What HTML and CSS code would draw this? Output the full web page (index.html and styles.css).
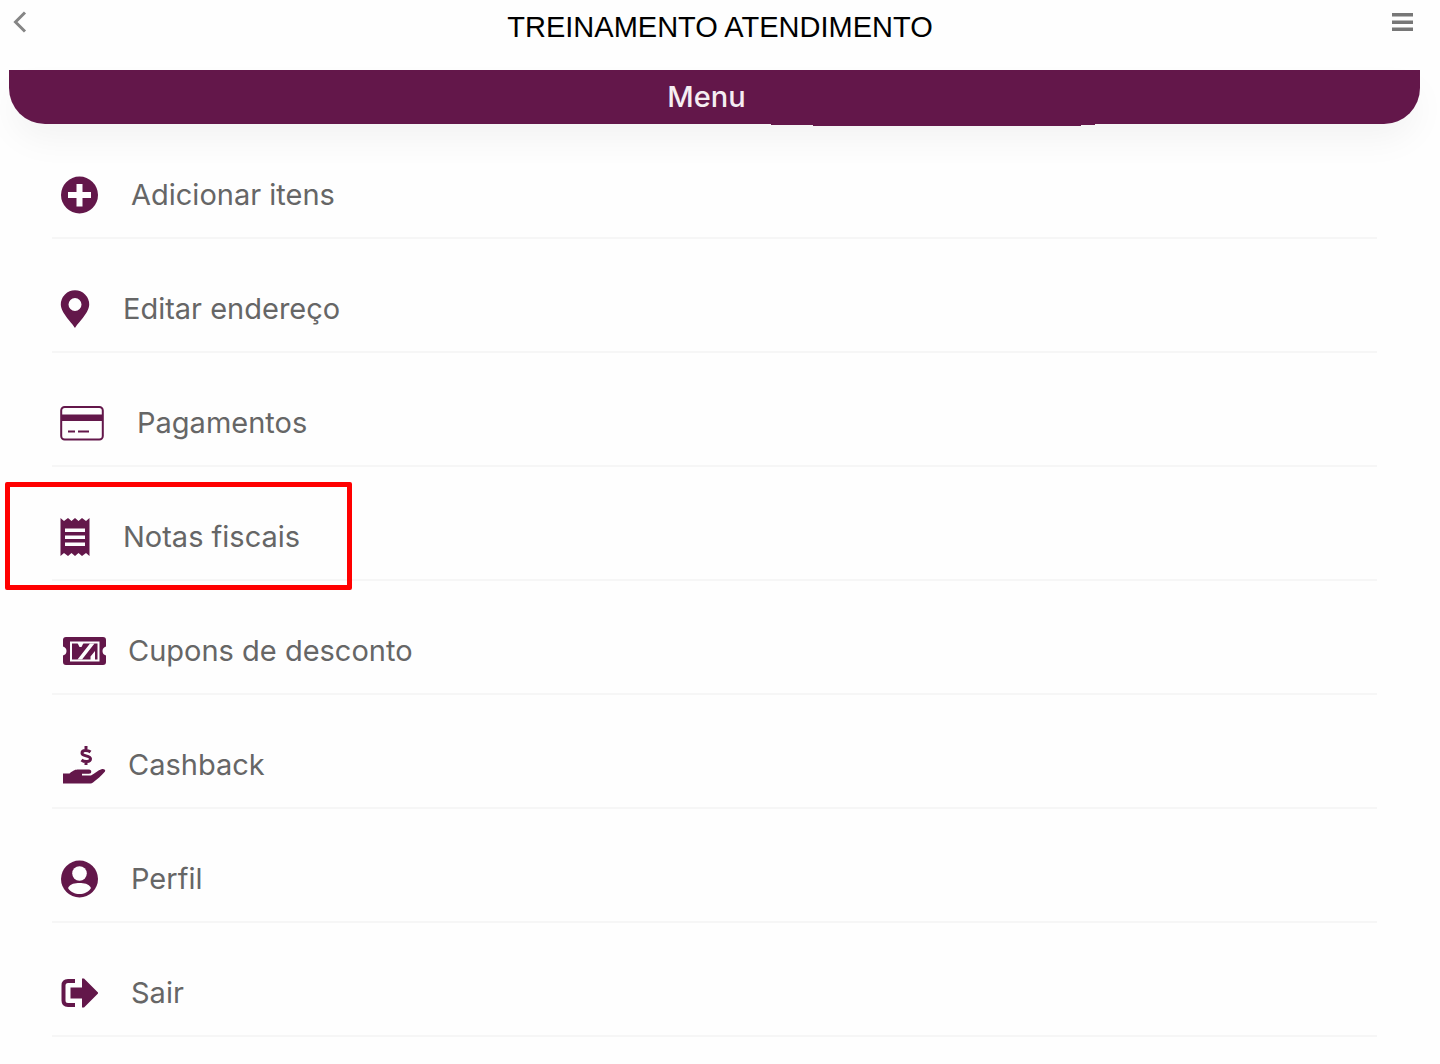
FILE: index.html
```html
<!DOCTYPE html>
<html lang="pt-BR">
<head>
  <meta charset="utf-8">
  <meta name="viewport" content="width=device-width, initial-scale=1">
  <title>Treinamento Atendimento</title>
  <link rel="stylesheet" href="styles.css">
</head>
<body>
  <header class="topbar">
    <button class="icon-button" type="button" aria-label="Voltar">
      <svg width="24" height="24" viewBox="0 0 24 24" fill="none" stroke="#858585" stroke-width="3"><path d="M17 2.500 7.500 12 17 21.500"/></svg>
    </button>
    <h1 class="topbar-title">TREINAMENTO ATENDIMENTO</h1>
    <button class="icon-button" type="button" aria-label="Abrir menu">
      <svg width="24" height="24" viewBox="0 0 24 24" fill="#777"><path d="M2 3h21v3.500H2zM2 10.500h21V14H2zM2 17.500h21V21H2z"/></svg>
    </button>
  </header>

  <main>
    <h2 class="banner">Menu</h2>
    <nav aria-label="Menu">
      <ul class="menu">
        <li class="menu-item">
          <a class="menu-link" href="#adicionar">
            <svg width="38" height="38" viewBox="0 0 38 38"><circle cx="19.500" cy="19" r="18.500"/><path class="cut" d="M16.500 8h6v8h8.500v6h-8.500v8.500h-6V22H8v-6h8.500z"/></svg>
            <span>Adicionar itens</span>
          </a>
        </li>
        <li class="menu-item">
          <a class="menu-link" href="#endereco">
            <svg width="30" height="38" viewBox="0 0 30 38"><path fill-rule="evenodd" d="M15 38C13 34 .8 23 .8 14.500a14.200 14.200 0 0 1 28.400 0C29.200 23 17 34 15 38zM15 8a6.500 6.500 0 1 0 0 13 6.500 6.500 0 0 0 0-13z"/></svg>
            <span>Editar endereço</span>
          </a>
        </li>
        <li class="menu-item">
          <a class="menu-link" href="#pagamentos">
            <svg width="44" height="38" viewBox="0 0 44 38"><rect class="line" x="1.200" y="3" width="41.600" height="32.500" rx="3.500"/><path d="M1 10.500h42v6.500H1zM8 26.500h7v2H8zM18 26.500h11v2H18z"/></svg>
            <span>Pagamentos</span>
          </a>
        </li>
        <li class="menu-item highlighted">
          <a class="menu-link" href="#notas">
            <svg width="30" height="38" viewBox="0 0 30 38"><path d="M.5 0l3.500 3 4-3 3.500 3L15 0l3.500 3L22 0l4 3 3.500-3v38L26 35l-4 3-3.500-3-3.500 3-3.500-3L8 38l-4-3-3.500 3z"/><path class="cut" d="M5 10.500h20v3.500H5zM5 17.500h20V21H5zM5 24.500h20V28H5z"/></svg>
            <span>Notas fiscais</span>
          </a>
        </li>
        <li class="menu-item">
          <a class="menu-link wide-icon" href="#cupons">
            <svg width="46" height="38" viewBox="0 0 46 38"><path d="M6 5h37q3 0 3 3v6.500q-3.500 1-3.500 4.500t3.500 4.500V30q0 3-3 3H6q-3 0-3-3v-6.500q3.500-1 3.500-4.500T3 14.500V8q0-3 3-3z"/><rect class="cut-line" x="11" y="10.500" width="27.500" height="18"/><path class="cut" d="M30 11.500h4.500L22 27.500h-4.500zM17.500 11h6l-2 4h-2zM35 19v9h-4.500v-3.500z"/></svg>
            <span>Cupons de desconto</span>
          </a>
        </li>
        <li class="menu-item">
          <a class="menu-link wide-icon" href="#cashback">
            <svg width="46" height="38" viewBox="0 0 46 38"><path d="M3 27.500h6.500c4-3.500 6-4 9-4h10.500c3 0 3 4.300 0 4.300h-7v1.600h9c4-2 7-5.400 10.500-6.200 2.500-.5 4.500.8 3.500 2.300-3.500 4-8 8-12 11-.8.700-1.500 1-2.500 1H3z"/><path class="dollar" d="M30.500 6c-2-1.600-8.500-2.500-8.500 1.200 0 3.300 8.500 2 8.500 5.600 0 3.700-6.500 3.200-9 1.200M26 0v4M26 15v4"/></svg>
            <span>Cashback</span>
          </a>
        </li>
        <li class="menu-item">
          <a class="menu-link" href="#perfil">
            <svg width="38" height="38" viewBox="0 0 38 38"><circle cx="19.500" cy="19" r="18.500"/><circle class="cut" cx="19.500" cy="13.500" r="7.300"/><path class="cut" d="M8 28c2.500-4.500 7-5 11.500-5S28.500 23.500 31 28c-2.500 4-7 6-11.500 6S10.500 32 8 28z"/></svg>
            <span>Perfil</span>
          </a>
        </li>
        <li class="menu-item">
          <a class="menu-link" href="#sair">
            <svg width="38" height="38" viewBox="0 0 38 38"><path class="door" d="M15 7H8q-4.500 0-4.500 4.500v15Q3.500 31 8 31h7"/><path d="M10.500 13.500H22v-9h2L38.500 19 24 33.500h-2V24.500H10.500z"/></svg>
            <span>Sair</span>
          </a>
        </li>
      </ul>
    </nav>
  </main>
</body>
</html>
```
FILE: styles.css
```css
:root {
  --brand: #63174a;
  --surface: #fefefe;
}

*,
*::before,
*::after {
  box-sizing: border-box;
}

body {
  margin: 0;
  background: var(--surface);
  color: #666;
  font-family: Inter, sans-serif;
}

.topbar {
  display: flex;
  align-items: flex-start;
  justify-content: space-between;
  height: 70px;
  padding: 10px 26px 0 8px;
}

.icon-button {
  padding: 0;
  border: 0;
  background: none;
  cursor: pointer;
}

.icon-button svg {
  display: block;
}

.topbar-title {
  flex: 1;
  margin: 0;
  padding-left: 18px;
  color: #000;
  font: 400 29px/34px "Liberation Sans", Arial, sans-serif;
  text-align: center;
}

.banner {
  position: relative;
  margin: 0 20px 0 9px;
  padding: 10px 16px 10px 0;
  border-radius: 0 0 36px 36px;
  background: var(--brand);
  box-shadow: 0 18px 36px -4px rgba(0, 0, 0, 0.05);
  color: #f5edf2;
  font-size: 29px;
  font-weight: 500;
  line-height: 34px;
  text-align: center;
}

/* Shallow lip under the right half of the banner */
.banner::before,
.banner::after {
  content: "";
  position: absolute;
  top: 100%;
  left: 54%;
  width: 23%;
  height: 1px;
  background: var(--brand);
}

.banner::after {
  left: 57%;
  width: 19%;
  height: 2px;
}

.menu {
  margin: 0 63px 0 52px;
  padding: 1px 0 0;
  list-style: none;
}

.menu-item {
  position: relative;
  border-bottom: 2px solid #f6f6f6;
}

.menu-link {
  display: flex;
  align-items: center;
  gap: 33px;
  padding: 50px 8px 22px;
  color: inherit;
  font-size: 29px;
  line-height: 40px;
  text-decoration: none;
}

.wide-icon {
  gap: 22px;
}

.menu-link svg {
  flex: none;
  fill: var(--brand);
}

.menu-link .cut {
  fill: var(--surface);
}

.menu-link .line,
.menu-link .door,
.menu-link .dollar,
.menu-link .cut-line {
  fill: none;
  stroke: var(--brand);
  stroke-width: 2;
}

.menu-link .door {
  stroke-width: 4;
}

.menu-link .dollar {
  stroke-width: 3;
}

.menu-link .cut-line {
  stroke: var(--surface);
}

.highlighted::after {
  content: "";
  position: absolute;
  top: 15px;
  bottom: -11px;
  left: -47px;
  width: 347px;
  border: 5px solid #f00;
  border-radius: 2px;
  pointer-events: none;
}
```
